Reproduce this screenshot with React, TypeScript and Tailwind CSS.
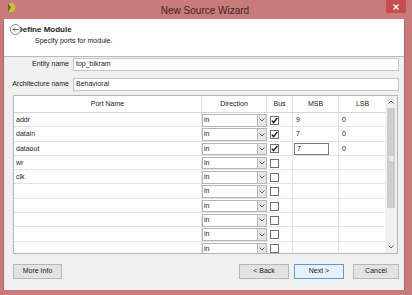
import React from 'react';

type Port = { name: string; bus: boolean; msb: string; lsb: string; editing?: boolean };

const ports: Port[] = [
  { name: 'addr', bus: true, msb: '9', lsb: '0' },
  { name: 'datain', bus: true, msb: '7', lsb: '0' },
  { name: 'dataout', bus: true, msb: '7', lsb: '0', editing: true },
  { name: 'wr', bus: false, msb: '', lsb: '' },
  { name: 'clk', bus: false, msb: '', lsb: '' },
  { name: '', bus: false, msb: '', lsb: '' },
  { name: '', bus: false, msb: '', lsb: '' },
  { name: '', bus: false, msb: '', lsb: '' },
  { name: '', bus: false, msb: '', lsb: '' },
  { name: '', bus: false, msb: '', lsb: '' },
];

const cols = 'grid grid-cols-[188px_65px_26px_46px_47px]';

function Checkbox({ checked }: { checked: boolean }) {
  return (
    <div className="w-[9px] h-[9px] border border-[#707070] bg-white flex items-center justify-center">
      {checked && (
        <svg width="7" height="7" viewBox="0 0 7 7">
          <path d="M0.8 3.6 L2.6 5.6 L6.3 0.9" fill="none" stroke="#111" strokeWidth="1.4" />
        </svg>
      )}
    </div>
  );
}

function Chevron({ up }: { up?: boolean }) {
  return (
    <svg width="6" height="4" viewBox="0 0 6 4">
      <path d={up ? 'M0.5 3.5 L3 1 L5.5 3.5' : 'M0.5 0.5 L3 3 L5.5 0.5'} fill="none" stroke="#606060" strokeWidth="1" />
    </svg>
  );
}

function PortRow({ p }: { p: Port }) {
  return (
    <div className={`${cols} h-[14.3px] border-b border-[#e3e3e3] bg-white`}>
      <div className="pl-[2px] flex items-center border-r border-[#e3e3e3]">{p.name}</div>
      <div className="flex items-stretch py-[1px]">
        <div className="flex-1 flex items-center pl-[1px] border border-[#b5b5b5] border-r-0 bg-white">in</div>
        <div className="w-[10px] flex items-center justify-center border border-[#b5b5b5] bg-[#e6e6e6]">
          <Chevron />
        </div>
      </div>
      <div className="flex items-center pl-[3px] border-r border-[#e3e3e3]">
        <Checkbox checked={p.bus} />
      </div>
      <div className="flex items-center border-r border-[#e3e3e3]">
        {p.editing ? (
          <div className="ml-[1px] w-[35px] h-[12px] border border-[#7a7a7a] flex items-center pl-[2px]">{p.msb}</div>
        ) : (
          <span className="pl-[3px]">{p.msb}</span>
        )}
      </div>
      <div className="flex items-center pl-[3px]">{p.lsb}</div>
    </div>
  );
}

function Button({ label, primary }: { label: string; primary?: boolean }) {
  return (
    <div
      className={`h-[15px] flex items-center justify-center border ${
        primary ? 'border-[#5d9bd3] bg-[#e5f1fb]' : 'border-[#b7b7b7] bg-[#e3e3e3]'
      }`}
    >
      {label}
    </div>
  );
}

export default function App() {
  return (
    <div
      className="w-[412px] h-[295px] bg-[#c97b7b] flex flex-col text-[7px] text-[#1a1a1a]"
      style={{ fontFamily: '"Liberation Sans", Arial, sans-serif' }}
    >
      {/* Title bar */}
      <div className="h-[19px] flex items-start">
        <div className="w-[160px] pl-[8px] pt-[3px]">
          <svg width="8" height="9" viewBox="0 0 8 9">
            <path d="M0 0 L5 0 L8 4.5 L5 9 L0 9 L3 4.5 Z" fill="#c9c239" />
            <path d="M0 0 L3 4.5 L0 9 Z" fill="#6d6a1c" />
          </svg>
        </div>
        <div className="flex-1 text-center text-[10px] text-[#3d2424] pt-[3px] pr-[2px]">New Source Wizard</div>
        <div className="w-[160px] flex justify-end pr-[6px]">
          <div className="w-[20px] h-[13px] bg-[#c44f4f] flex items-center justify-center">
            <svg width="6" height="6" viewBox="0 0 6 6">
              <path d="M0.5 0.5 L5.5 5.5 M5.5 0.5 L0.5 5.5" stroke="#fff" strokeWidth="1.3" />
            </svg>
          </div>
        </div>
      </div>

      {/* Body */}
      <div className="flex h-[271px]">
        <div className="w-[4px] bg-[#c97b7b] border-r border-[#b06464]" />
        <div className="w-[400px] flex flex-col bg-[#f0f0f0]">
          {/* Header */}
          <div className="h-[38px] bg-white border-b border-[#b9b9b9] relative">
            <div className="absolute left-[6px] top-[5px] w-[11px] h-[11px] rounded-full border border-[#8a8a8a] bg-white flex items-center justify-center">
              <svg width="7" height="5" viewBox="0 0 7 5">
                <path d="M6.5 2.5 L1 2.5 M3 0.5 L1 2.5 L3 4.5" fill="none" stroke="#555" strokeWidth="0.9" />
              </svg>
            </div>
            <div className="pl-[13px] pt-[6px] font-bold text-[8px] leading-[10px]">Define Module</div>
            <div className="pl-[31px] pt-[1px] leading-[10px]">Specify ports for module.</div>
          </div>

          {/* Names */}
          <div className="pt-[1px] pr-[5px] flex flex-col gap-[7px]">
            <div className="flex items-center gap-[4px]">
              <div className="w-[65px] text-right">Entity name</div>
              <div className="flex-1 h-[13px] bg-white border border-[#c5c5c5] flex items-center pl-[2px]">top_blkram</div>
            </div>
            <div className="flex items-center gap-[4px]">
              <div className="w-[65px] text-right">Architecture name</div>
              <div className="flex-1 h-[13px] bg-white border border-[#c5c5c5] flex items-center pl-[2px]">Behavioral</div>
            </div>
          </div>

          {/* Port table */}
          <div className="mt-[4px] ml-[9px] mr-[6px] h-[159px] flex border border-[#b4b4b4] bg-white">
            <div className="flex-1 flex flex-col overflow-hidden">
              <div className={`${cols} h-[17px] shrink-0 border-b border-[#d5d5d5]`}>
                <div className="flex items-center justify-center border-r border-[#e3e3e3]">Port Name</div>
                <div className="flex items-center justify-center border-r border-[#e3e3e3]">Direction</div>
                <div className="flex items-center justify-center border-r border-[#e3e3e3]">Bus</div>
                <div className="flex items-center justify-center border-r border-[#e3e3e3]">MSB</div>
                <div className="flex items-center justify-center">LSB</div>
              </div>
              {ports.map((p, i) => (
                <PortRow key={i} p={p} />
              ))}
            </div>
            <div className="w-[12px] shrink-0 bg-[#f0f0f0] flex flex-col">
              <div className="h-[12px] flex items-center justify-center">
                <Chevron up />
              </div>
              <div className="mx-[2px] h-[100px] bg-[#cdcdcd] flex items-center justify-center">
                <div className="w-[5px] h-[5px] bg-[#e6e6e6]" />
              </div>
              <div className="flex-1" />
              <div className="h-[12px] flex items-center justify-center">
                <Chevron />
              </div>
            </div>
          </div>

          {/* Buttons */}
          <div className="mt-[10px] pl-[9px] pr-[5px] flex items-center">
            <div className="w-[49px]">
              <Button label="More Info" />
            </div>
            <div className="flex-1" />
            <div className="w-[50px]">
              <Button label="< Back" />
            </div>
            <div className="w-[50px] ml-[5px]">
              <Button label="Next >" primary />
            </div>
            <div className="w-[46px] ml-[9px]">
              <Button label="Cancel" />
            </div>
          </div>
        </div>
        <div className="flex-1 bg-[#c97b7b] border-l border-[#b06464]" />
      </div>
    </div>
  );
}
